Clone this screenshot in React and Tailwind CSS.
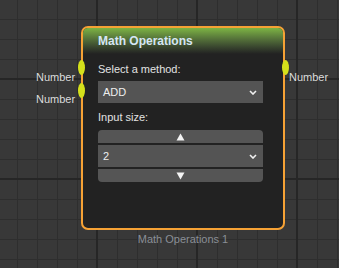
import React from 'react';

const font = { fontFamily: '"Liberation Sans", Arial, sans-serif' };

const Chevron = () => (
  <svg width="8" height="5" viewBox="0 0 8 5" className="shrink-0">
    <polyline points="1,1 4,4 7,1" fill="none" stroke="#f0f0f0" strokeWidth="1.6" />
  </svg>
);

const Arrow = ({ up }) => (
  <svg width="9" height="8" viewBox="0 0 9 8">
    <polygon points={up ? '4.5,0.5 8.5,7.5 0.5,7.5' : '0.5,0.5 8.5,0.5 4.5,7.5'} fill="#f4f4f4" />
  </svg>
);

const Socket = ({ className }) => (
  <div className={`absolute w-[7px] h-[15px] rounded-[50%] bg-[#d4e01b] ${className}`} />
);

export default function App() {
  return (
    <div
      className="relative w-[339px] h-[268px] overflow-hidden bg-[#383838] [background-image:linear-gradient(90deg,#262626_2px,transparent_2px),linear-gradient(#262626_2px,transparent_2px),linear-gradient(90deg,#2e2e2e_1px,transparent_1px),linear-gradient(#2e2e2e_1px,transparent_1px)] [background-size:100px_100px,100px_100px,20px_20px,20px_20px] [background-position:96px_0,0_78px,17px_0,0_19px]"
      style={font}
    >
      <div className="absolute left-[81px] top-[26px] w-[204px] flex flex-col items-center">
        <div className="w-[204px] h-[204px] rounded-[7px] border-2 border-[#f6a235] bg-[#222222] overflow-hidden flex flex-col">
          <div className="h-[26px] shrink-0 pl-[15px] flex items-center bg-gradient-to-b from-[#7db443] to-[#222222] text-[12px] font-bold text-[#d6e6f4]">
            Math Operations
          </div>
          <div className="pl-[15px] flex flex-col">
            <div className="mt-[8px] h-[14px] leading-[14px] text-[11px] text-[#e2e2e2]">Select a method:</div>
            <div className="mt-[5px] w-[165px] h-[22px] bg-[#545454] flex items-center justify-between pl-[5px] pr-[6px] text-[11px] text-[#eeeeee]">
              <span>ADD</span>
              <Chevron />
            </div>
            <div className="mt-[7px] h-[14px] leading-[14px] text-[11px] text-[#e2e2e2]">Input size:</div>
            <div className="mt-[6px] w-[165px] flex flex-col gap-[2px]">
              <div className="h-[13px] bg-[#555555] rounded-t-[4px] flex items-center justify-center">
                <Arrow up />
              </div>
              <div className="h-[22px] bg-[#545454] flex items-center justify-between pl-[5px] pr-[6px] text-[11px] text-[#eeeeee]">
                <span>2</span>
                <Chevron />
              </div>
              <div className="h-[13px] bg-[#555555] rounded-b-[4px] flex items-center justify-center">
                <Arrow />
              </div>
            </div>
          </div>
        </div>
        <div className="mt-[2px] h-[14px] leading-[14px] text-[11px] text-[#8a8f96]">Math Operations 1</div>

        <Socket className="left-[-3px] top-[34px]" />
        <Socket className="left-[-3px] top-[57px]" />
        <Socket className="left-[201px] top-[34px]" />

        <div className="absolute left-[-45px] top-[44px] w-[39px] text-right leading-[14px] text-[11px] text-[#dcdcdc]">Number</div>
        <div className="absolute left-[-45px] top-[66px] w-[39px] text-right leading-[14px] text-[11px] text-[#dcdcdc]">Number</div>
        <div className="absolute left-[208px] top-[44px] leading-[14px] text-[11px] text-[#dcdcdc]">Number</div>
      </div>
    </div>
  );
}
